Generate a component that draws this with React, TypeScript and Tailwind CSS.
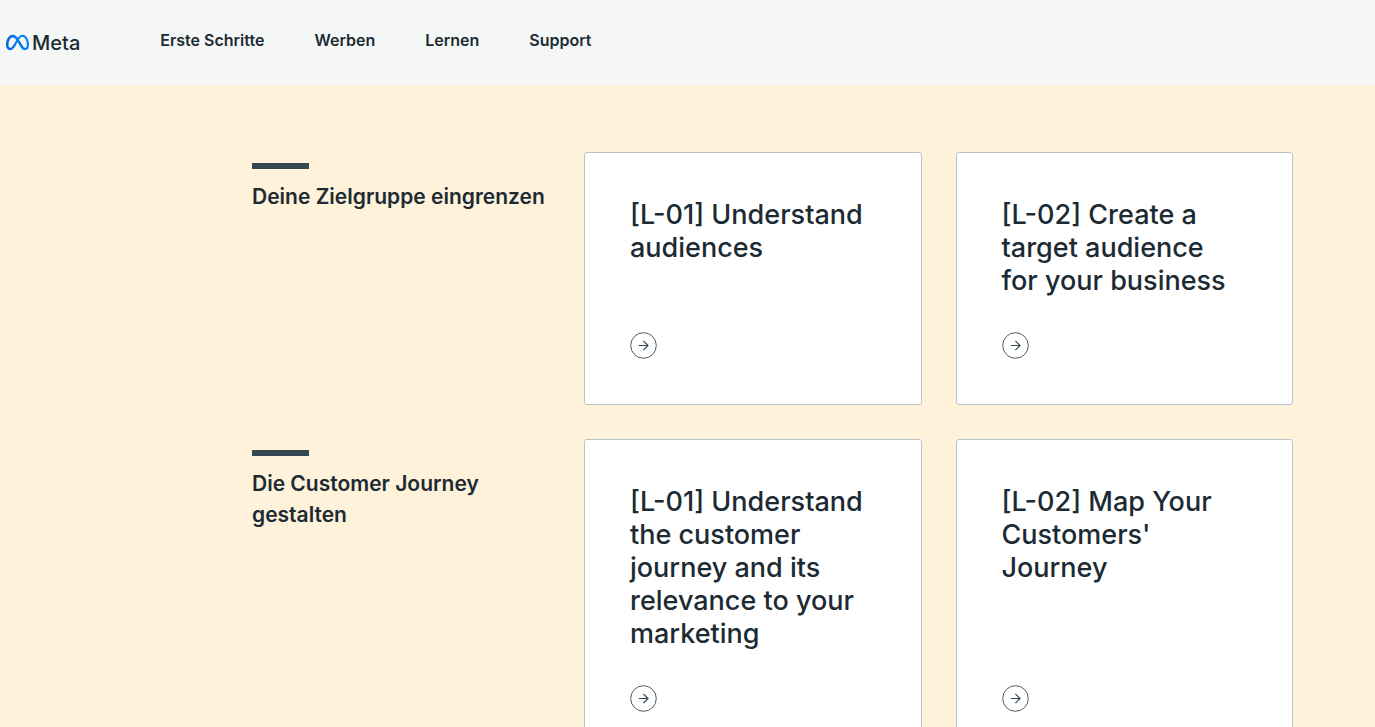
import { SiMeta } from "react-icons/si";

const NAV_LINKS = ["Erste Schritte", "Werben", "Lernen", "Support"];

interface Topic {
  title: string;
  lessons: string[];
}

const TOPICS: Topic[] = [
  {
    title: "Deine Zielgruppe eingrenzen",
    lessons: ["[L-01] Understand audiences", "[L-02] Create a target audience for your business"],
  },
  {
    title: "Die Customer Journey gestalten",
    lessons: [
      "[L-01] Understand the customer journey and its relevance to your marketing",
      "[L-02] Map Your Customers' Journey",
    ],
  },
];

function ArrowCircle() {
  return (
    <svg viewBox="0 0 27 27" fill="none" className="size-[27px] text-[#344854]" aria-hidden="true">
      <circle cx="13.5" cy="13.5" r="12.8" stroke="currentColor" strokeWidth="0.9" />
      <path d="M8.8 13.5h9.2M13.4 8.9l4.6 4.6-4.6 4.6" stroke="currentColor" strokeWidth="1.2" />
    </svg>
  );
}

function LessonCard({ title }: { title: string }) {
  return (
    <a
      href="#"
      className="flex flex-col justify-between gap-[35px] rounded-[3px] border border-[#bcc2ca] bg-white p-[45px]"
    >
      <h3 className="text-[27px] font-medium leading-[33px]">{title}</h3>
      <ArrowCircle />
    </a>
  );
}

function Header() {
  return (
    <header className="flex items-start bg-[#f5f7f7] pt-7 pb-[31px] pl-1.5">
      <a href="#" className="mt-[3px] flex items-center gap-[3px] text-xl font-medium leading-5">
        <svg className="absolute size-0" aria-hidden="true">
          <linearGradient id="meta-blue" x1="0" x2="1">
            <stop offset="0" stopColor="#0068e4" />
            <stop offset="1" stopColor="#0082fb" />
          </linearGradient>
        </svg>
        <SiMeta className="size-[23px] fill-[url(#meta-blue)]" />
        Meta
      </a>
      <nav className="ml-20 flex gap-[50px] text-base font-semibold leading-6">
        {NAV_LINKS.map((link) => (
          <a key={link} href="#">
            {link}
          </a>
        ))}
      </nav>
    </header>
  );
}

export default function App() {
  return (
    <div className="min-h-screen bg-[#fff2da] font-['Inter',sans-serif] text-[#1c2b33]">
      <Header />
      <main className="flex flex-col gap-[34px] pt-[67px] pr-[82px] pb-16 pl-[252px]">
        {TOPICS.map((topic) => (
          <section key={topic.title} className="grid grid-cols-[298px_1fr_1fr] gap-[34px]">
            <div className="pt-[11px]">
              <div className="h-1.5 w-[57px] bg-[#344854]" />
              <h2 className="mt-3 text-[21px] font-semibold leading-[31px]">{topic.title}</h2>
            </div>
            {topic.lessons.map((lesson) => (
              <LessonCard key={lesson} title={lesson} />
            ))}
          </section>
        ))}
      </main>
    </div>
  );
}
